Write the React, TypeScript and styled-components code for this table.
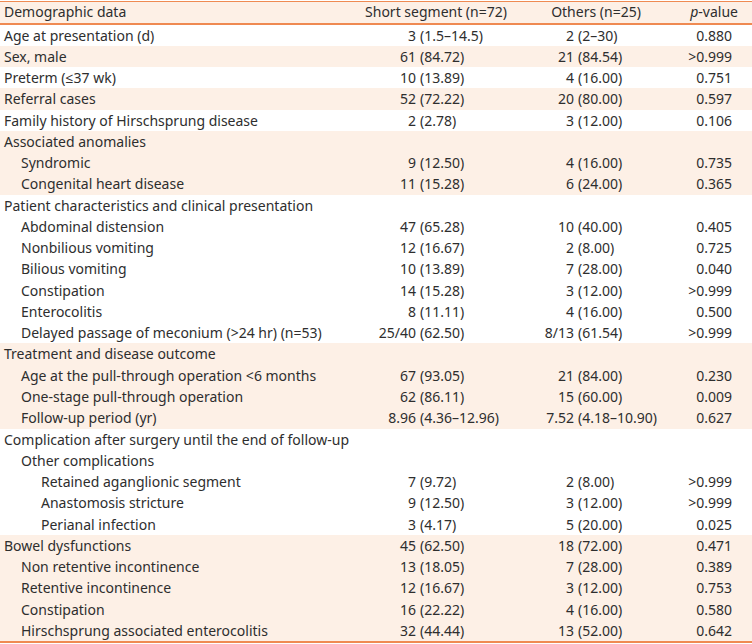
import React from 'react'
import styled, { createGlobalStyle } from 'styled-components'

const GlobalStyle = createGlobalStyle`
    html, body {
        margin: 0;
        padding: 0;
        background: #ffffff;
    }
    body {
        font-family: "Noto Sans", "Open Sans", sans-serif;
        color: #2e2e2e;
    }
`

const Orange = '#ef8a52'
const Shade = '#fdf0e6'

const Table = styled.div`
    width: 752px;
    margin-top: 1px;
    border-top: 1.5px solid ${Orange};
    border-bottom: 2px solid ${Orange};
    font-size: 14px;
`

const Row = styled.div<{ $shaded?: boolean; $head?: boolean }>`
    display: grid;
    grid-template-columns: 340px 192px 128px 92px;
    height: ${p => (p.$head ? '20.5px' : '21.28px')};
    line-height: ${p => (p.$head ? '20.5px' : '21.28px')};
    background: ${p => (p.$shaded ? Shade : 'transparent')};
    border-bottom: ${p => (p.$head ? `2px solid ${Orange}` : 'none')};
    white-space: nowrap;
`

const Label = styled.div<{ $level: number }>`
    padding-left: ${p => 4 + p.$level * 17 + (p.$level > 1 ? 3 : 0)}px;
`

const HeadCell = styled.div<{ $align?: string; $pad?: number }>`
    text-align: ${p => p.$align || 'center'};
    padding-right: ${p => p.$pad || 0}px;
`

const ValueCell = styled.div<{ $numWidth: number }>`
    display: flex;

    .num {
        width: ${p => p.$numWidth}px;
        text-align: right;
    }
    .rest {
        padding-left: 4px;
    }
`

const PCell = styled.div`
    text-align: right;
    padding-right: 20px;
`

interface IRow {
    label: string
    level: number
    short?: string
    others?: string
    p?: string
    shaded?: boolean
}

const rows: Array<IRow> = [
    { label: 'Age at presentation (d)', level: 0, short: '3 (1.5–14.5)', others: '2 (2–30)', p: '0.880' },
    { label: 'Sex, male', level: 0, short: '61 (84.72)', others: '21 (84.54)', p: '>0.999', shaded: true },
    { label: 'Preterm (≤37 wk)', level: 0, short: '10 (13.89)', others: '4 (16.00)', p: '0.751' },
    { label: 'Referral cases', level: 0, short: '52 (72.22)', others: '20 (80.00)', p: '0.597', shaded: true },
    { label: 'Family history of Hirschsprung disease', level: 0, short: '2 (2.78)', others: '3 (12.00)', p: '0.106' },
    { label: 'Associated anomalies', level: 0, shaded: true },
    { label: 'Syndromic', level: 1, short: '9 (12.50)', others: '4 (16.00)', p: '0.735', shaded: true },
    { label: 'Congenital heart disease', level: 1, short: '11 (15.28)', others: '6 (24.00)', p: '0.365', shaded: true },
    { label: 'Patient characteristics and clinical presentation', level: 0 },
    { label: 'Abdominal distension', level: 1, short: '47 (65.28)', others: '10 (40.00)', p: '0.405' },
    { label: 'Nonbilious vomiting', level: 1, short: '12 (16.67)', others: '2 (8.00)', p: '0.725' },
    { label: 'Bilious vomiting', level: 1, short: '10 (13.89)', others: '7 (28.00)', p: '0.040' },
    { label: 'Constipation', level: 1, short: '14 (15.28)', others: '3 (12.00)', p: '>0.999' },
    { label: 'Enterocolitis', level: 1, short: '8 (11.11)', others: '4 (16.00)', p: '0.500' },
    { label: 'Delayed passage of meconium (>24 hr) (n=53)', level: 1, short: '25/40 (62.50)', others: '8/13 (61.54)', p: '>0.999' },
    { label: 'Treatment and disease outcome', level: 0, shaded: true },
    { label: 'Age at the pull-through operation <6 months', level: 1, short: '67 (93.05)', others: '21 (84.00)', p: '0.230', shaded: true },
    { label: 'One-stage pull-through operation', level: 1, short: '62 (86.11)', others: '15 (60.00)', p: '0.009', shaded: true },
    { label: 'Follow-up period (yr)', level: 1, short: '8.96 (4.36–12.96)', others: '7.52 (4.18–10.90)', p: '0.627', shaded: true },
    { label: 'Complication after surgery until the end of follow-up', level: 0 },
    { label: 'Other complications', level: 1 },
    { label: 'Retained aganglionic segment', level: 2, short: '7 (9.72)', others: '2 (8.00)', p: '>0.999' },
    { label: 'Anastomosis stricture', level: 2, short: '9 (12.50)', others: '3 (12.00)', p: '>0.999' },
    { label: 'Perianal infection', level: 2, short: '3 (4.17)', others: '5 (20.00)', p: '0.025' },
    { label: 'Bowel dysfunctions', level: 0, short: '45 (62.50)', others: '18 (72.00)', p: '0.471', shaded: true },
    { label: 'Non retentive incontinence', level: 1, short: '13 (18.05)', others: '7 (28.00)', p: '0.389', shaded: true },
    { label: 'Retentive incontinence', level: 1, short: '12 (16.67)', others: '3 (12.00)', p: '0.753', shaded: true },
    { label: 'Constipation', level: 1, short: '16 (22.22)', others: '4 (16.00)', p: '0.580', shaded: true },
    { label: 'Hirschsprung associated enterocolitis', level: 1, short: '32 (44.44)', others: '13 (52.00)', p: '0.642', shaded: true },
]

const Value: React.FC<{ text?: string; numWidth: number }> = ({ text, numWidth }) => {
    if (!text) return <div />
    const idx = text.indexOf(' (')
    const num = text.slice(0, idx)
    const rest = text.slice(idx + 1)
    return (
        <ValueCell $numWidth={numWidth}>
            <span className='num'>{num}</span>
            <span className='rest'>{rest}</span>
        </ValueCell>
    )
}

const App: React.FC = () => {
    return (
        <>
            <GlobalStyle />
            <Table>
                <Row $head $shaded>
                    <Label $level={0}>Demographic data</Label>
                    <HeadCell>Short segment (n=72)</HeadCell>
                    <HeadCell>Others (n=25)</HeadCell>
                    <HeadCell $align='right' $pad={14}><i>p</i>-value</HeadCell>
                </Row>
                {rows.map((r, k) => (
                    <Row key={k} $shaded={r.shaded}>
                        <Label $level={r.level}>{r.label}</Label>
                        <Value text={r.short} numWidth={76} />
                        <Value text={r.others} numWidth={42} />
                        <PCell>{r.p || ''}</PCell>
                    </Row>
                ))}
            </Table>
        </>
    )
}

export default App
